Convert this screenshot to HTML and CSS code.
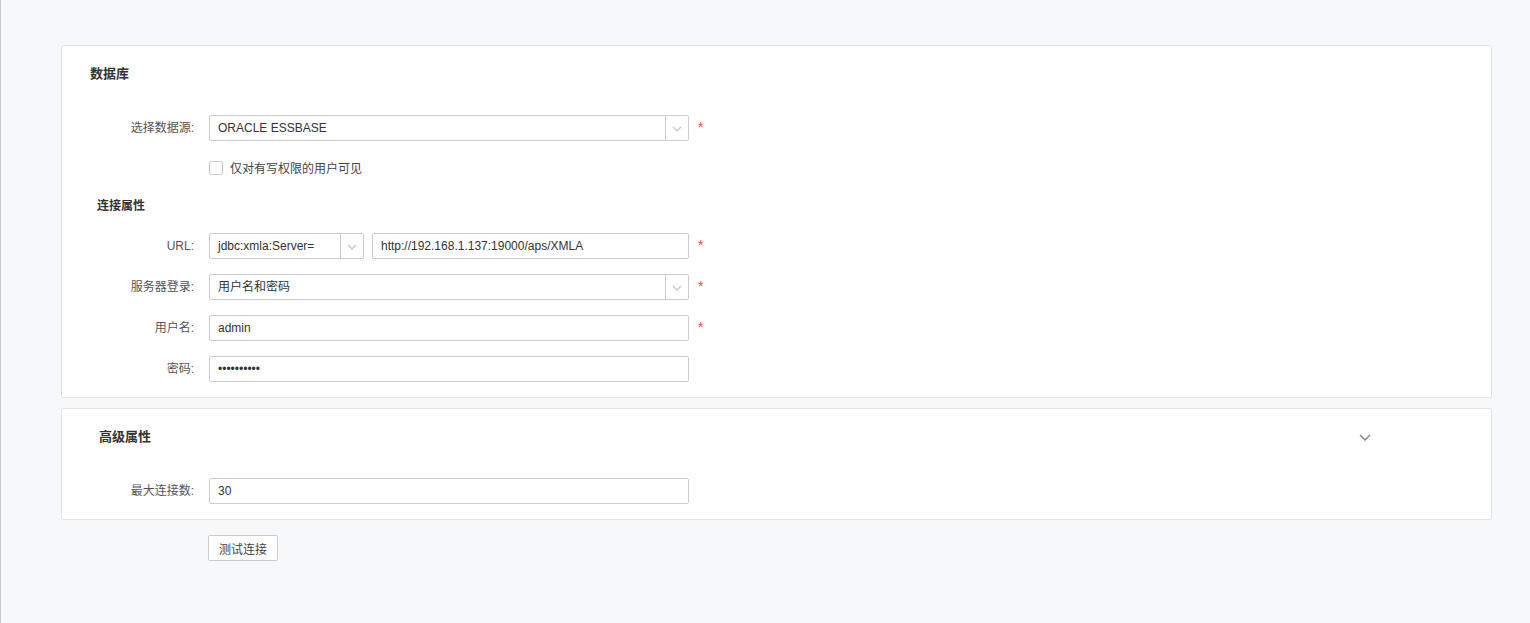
FILE: index.html
```html
<!DOCTYPE html>
<html lang="zh">
<head>
<meta charset="utf-8">
<link rel="stylesheet" href="styles.css">
</head>
<body>
<div class="page">
  <section class="panel panel-db">
    <h2 class="panel-title">数据库</h2>
    <div class="row row-first">
      <label class="lbl">选择数据源:</label>
      <div class="select w480">
        <span class="select-text">ORACLE ESSBASE</span>
        <span class="select-arrow"><svg width="10" height="6" viewBox="0 0 10 6"><path d="M1 1l4 4 4-4" fill="none" stroke="#c4c4c4" stroke-width="1.2"/></svg></span>
      </div>
      <span class="req">*</span>
    </div>
    <div class="row row-check">
      <span class="lbl"></span>
      <span class="checkbox"></span>
      <span class="check-text">仅对有写权限的用户可见</span>
    </div>
    <h3 class="sub-title">连接属性</h3>
    <div class="row">
      <label class="lbl">URL:</label>
      <div class="select w155">
        <span class="select-text">jdbc:xmla:Server=</span>
        <span class="select-arrow"><svg width="10" height="6" viewBox="0 0 10 6"><path d="M1 1l4 4 4-4" fill="none" stroke="#c4c4c4" stroke-width="1.2"/></svg></span>
      </div>
      <div class="input w317">http://192.168.1.137:19000/aps/XMLA</div>
      <span class="req">*</span>
    </div>
    <div class="row">
      <label class="lbl">服务器登录:</label>
      <div class="select w480">
        <span class="select-text">用户名和密码</span>
        <span class="select-arrow"><svg width="10" height="6" viewBox="0 0 10 6"><path d="M1 1l4 4 4-4" fill="none" stroke="#c4c4c4" stroke-width="1.2"/></svg></span>
      </div>
      <span class="req">*</span>
    </div>
    <div class="row">
      <label class="lbl">用户名:</label>
      <div class="input w480">admin</div>
      <span class="req">*</span>
    </div>
    <div class="row">
      <label class="lbl">密码:</label>
      <div class="input w480 pwd">••••••••••</div>
    </div>
  </section>

  <section class="panel panel-adv">
    <div class="adv-head">
      <h2 class="panel-title adv-title">高级属性</h2>
      <svg class="adv-chevron" width="12" height="7" viewBox="0 0 12 7"><path d="M1 1l5 5 5-5" fill="none" stroke="#8a8a8a" stroke-width="1.5"/></svg>
    </div>
    <div class="row">
      <label class="lbl">最大连接数:</label>
      <div class="input w480">30</div>
    </div>
  </section>

  <div class="actions">
    <button class="btn">测试连接</button>
  </div>
</div>
</body>
</html>
```

FILE: styles.css
```css
* { box-sizing: border-box; }
html, body {
  margin: 0;
  height: 100%;
}
body {
  background: #f7f8fa;
  font-family: "Liberation Sans", "Noto Sans CJK SC", sans-serif;
  font-size: 12px;
  color: #333;
}
.page {
  min-height: 100%;
  border-left: 1px solid #c9c9cc;
  padding: 45px 38px 0 60px;
}
.panel {
  background: #fff;
  border: 1px solid #e3e3e3;
  border-radius: 2px;
}
.panel-db {
  height: 353px;
  padding: 18px 0 0 0;
}
.panel-title {
  margin: 0 0 0 28px;
  font-size: 13px;
  font-weight: bold;
  line-height: 20px;
  color: #333;
}
.row {
  display: flex;
  align-items: flex-start;
  margin-top: 15px;
  height: 26px;
}
.row-first { margin-top: 31px; }
.lbl {
  width: 132px;
  flex: none;
  text-align: right;
  line-height: 26px;
  color: #555;
  margin-right: 15px;
}
.select, .input {
  flex: none;
  height: 26px;
  border: 1px solid #cccccc;
  border-radius: 2px;
  background: #fff;
  color: #333;
  line-height: 24px;
}
.w480 { width: 480px; }
.w155 { width: 155px; margin-right: 8px; }
.w317 { width: 317px; }
.select { display: flex; }
.select-text {
  flex: 1;
  padding-left: 8px;
  white-space: nowrap;
  overflow: hidden;
}
.select-arrow {
  width: 23px;
  border-left: 1px solid #cccccc;
  display: flex;
  align-items: center;
  justify-content: center;
  padding-top: 2px;
}
.input { padding-left: 8px; white-space: nowrap; }
.pwd { font-size: 12px; }
.req {
  color: #f04848;
  font-size: 14px;
  line-height: 14px;
  margin-left: 9px;
  margin-top: 5px;
}
.row-check {
  margin-top: 20px;
  height: 13px;
  align-items: center;
}
.row-check .lbl { line-height: 13px; }
.checkbox {
  width: 14px;
  height: 14px;
  border: 1px solid #cccccc;
  border-radius: 2px;
  background: #fff;
  margin-right: 7px;
}
.check-text { color: #444; font-size: 12px; }
.sub-title {
  margin: 23px 0 0 35px;
  font-size: 12px;
  font-weight: bold;
  line-height: 18px;
  color: #333;
}
.sub-title + .row { margin-top: 18px; }
.panel-adv {
  margin-top: 10px;
  height: 112px;
  padding-top: 18px;
}
.adv-head {
  display: flex;
  align-items: center;
  height: 20px;
}
.adv-title { margin-left: 37px; flex: 1; }
.adv-chevron { margin-right: 120px; }
.panel-adv .row { margin-top: 31px; }
.actions {
  padding: 15px 0 0 147px;
}
.btn {
  width: 70px;
  height: 26px;
  border: 1px solid #cccccc;
  border-radius: 2px;
  background: #fff;
  font-family: "Liberation Sans", "Noto Sans CJK SC", sans-serif;
  font-size: 12px;
  color: #444;
  padding: 0;
}
```
